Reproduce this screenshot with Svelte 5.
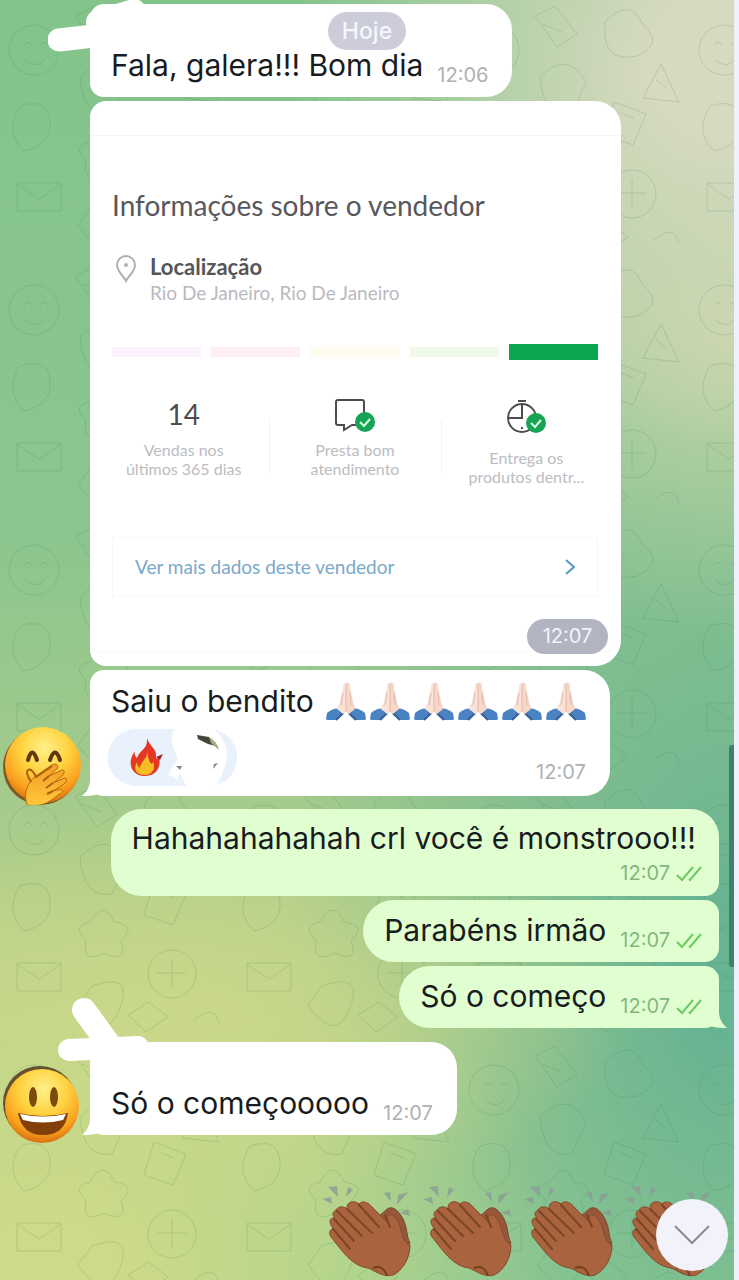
<script lang="ts">
	interface Stat {
		value?: string;
		icon?: 'balloon' | 'clock';
		lines: string[];
	}

	const levels = ['lilac', 'pink', 'yellow', 'lime', 'green'];
	const stats: Stat[] = [
		{ value: '14', lines: ['Vendas nos', 'últimos 365 dias'] },
		{ icon: 'balloon', lines: ['Presta bom', 'atendimento'] },
		{ icon: 'clock', lines: ['Entrega os', 'produtos dentr...'] }
	];
</script>

{#snippet checks()}
	<svg class="checks" viewBox="0 0 28 18" aria-hidden="true">
		<path d="M2 11 L7 16 L18 3 M14 15 L15 16 L26 3" />
	</svg>
{/snippet}

{#snippet tail()}
	<svg class="tail" viewBox="0 0 30 30" aria-hidden="true">
		<path d="M8 4 C9 18 7 24 0 30 C10 30 18 29 24 24 L30 10 V4Z" />
	</svg>
{/snippet}

{#snippet pray()}
	<svg class="pray" viewBox="0 0 40 40">
		<path d="M0 38 L1 32 Q8 26 14 28 L18 33 L11 39 H1Z" fill="#4a83c4" />
		<path d="M40 38 L39 32 Q32 26 26 28 L22 33 L29 39 H39Z" fill="#4a83c4" />
		<path d="M10 39 L17 32 L14 30 M30 39 L23 32 L26 30" stroke="#3b5f93" stroke-width="2" fill="none" />
		<path d="M20 2 Q17 1 17 6 L14 21 Q11 25 11 28 L17 33 L20 31Z" fill="#f9e3d8" />
		<path d="M20 2 Q24 0 24 6 L27 21 Q29 25 29 28 L23 33 L20 31Z" fill="#f6d8ca" />
		<path d="M20 3 V31 M17 12 L15 24 M24 12 L25 24" stroke="#e2b5a5" stroke-width="1" fill="none" />
	</svg>
{/snippet}

{#snippet clap()}
	<svg class="clap" viewBox="0 0 101 96">
		<g fill="#8b9c98" opacity="0.8">
			<path d="M6 3 L15 2 L16 13Z M26 3 L31 6 L24 13Z M0 15 L9 13 L10 20Z" />
			<path d="M62 9 L68 8 L69 18Z M76 11 L86 8 L75 21Z M78 29 L86 25 L88 32Z" />
		</g>
		<path
			d="M64 26 C70 20 77 27 81 35 C86 45 84 52 88 59 L67 76 L46 42Z"
			fill="#96573a"
			stroke="#7c4529"
			stroke-width="1"
		/>
		<path
			d="M14 26 C17 21 23 23 25 25 C24 17 33 16 37 20 C41 15 48 20 50 23 L66 39 C62 31 70 27 75 36 C81 46 79 57 88 61 C88 75 80 87 71 91 C61 94 52 86 46 84 C29 82 19 65 9 53 C6 48 9 44 12 45 C6 39 7 33 13 34 C9 30 12 27 14 26Z"
			fill="#a9643f"
			stroke="#84492a"
			stroke-width="1"
		/>
		<path
			d="M15 27 L40 52 M25 25 L50 49 M37 21 L57 43 M12 35 L32 57 M11 45 L28 65 M63 31 L68 43"
			stroke="#7d4426"
			stroke-width="2"
			fill="none"
			stroke-linecap="round"
		/>
		<path d="M51 84 Q61 80 65 92" stroke="#73401f" stroke-width="2" fill="none" />
	</svg>
{/snippet}

<main class="screen">
	<svg class="doodles" aria-hidden="true">
		<defs>
			<pattern id="doodle" width="230" height="260" patternUnits="userSpaceOnUse">
				<g fill="none" stroke="#2f7a55" stroke-width="1">
					<circle cx="34" cy="50" r="25" />
					<path d="M24 45 q4 -5 8 0 M40 45 q4 -5 8 0 M25 60 q12 10 20 -1" />
					<path d="M75 16 l20 -10 22 28 -20 13z M82 24 l20 8" />
					<path d="M145 22 q26 -26 38 3 q22 18 -6 31 q-36 8 -32 -34" />
					<path d="M201 64 l18 38 -36 -4z M196 80 l10 8" />
					<path d="M80 77 q28 -28 46 5 l-14 32 q-29 5 -32 -37" />
					<path d="M154 102 l32 12 -13 31 -29 -10z M161 113 l13 5" />
					<path d="M20 106 q28 -9 30 15 t-26 30 q-20 -20 -4 -45" />
					<path d="M90 142 q14 -24 24 0 q24 3 7 19 q8 23 -17 12 q-22 12 -18 -13 q-15 -14 4 -18" />
					<path d="M17 183 h44 v28 h-44z M17 184 l22 15 22 -15" />
					<circle cx="172" cy="194" r="24" />
					<path d="M157 193 h29 M172 179 v29 M92 206 q42 -15 28 22 t-42 -3z" />
					<path d="M128 235 l21 -13 19 15 -22 15z M194 240 q20 -17 25 3" />
				</g>
			</pattern>
		</defs>
		<rect width="100%" height="100%" fill="url(#doodle)" />
	</svg>

	<time class="date">Hoje</time>

	<article class="row">
		<div class="bubble named">
			<svg class="scribble-top" viewBox="0 0 100 60" aria-hidden="true">
				<path d="M11 42 L80 34" stroke-width="23" />
				<path d="M50 24 L86 13" stroke-width="24" />
			</svg>
			<p>Fala, galera!!! Bom dia</p>
			<time>12:06</time>
		</div>
	</article>

	<article class="row">
		<section class="card">
			<div class="card-top"></div>
			<h1>Informações sobre o vendedor</h1>
			<div class="location">
				<svg class="pin" viewBox="0 0 20 28" aria-hidden="true">
					<path d="M10 26 C8 21 1 17 1 10 A9 9 0 0 1 19 10 C19 17 12 21 10 26Z" />
					<circle cx="10" cy="10" r="1" />
				</svg>
				<div>
					<h2>Localização</h2>
					<p>Rio De Janeiro, Rio De Janeiro</p>
				</div>
			</div>
			<div class="levels">
				{#each levels as level}
					<span class={level}></span>
				{/each}
			</div>
			<div class="stats">
				{#each stats as stat}
					<div class="stat">
						{#if stat.value}
							<strong>{stat.value}</strong>
						{:else}
							<svg class={['stat-icon', stat.icon]} viewBox="0 0 42 36" aria-hidden="true">
								{#if stat.icon === 'balloon'}
									<path class="line" d="M4 2 H28 Q30 2 30 4 V27 H18 L10 32 V27 H4 Q2 27 2 25 V4 Q2 2 4 2Z" />
								{:else}
									<circle class="line" cx="17" cy="19" r="14" />
									<path class="line" d="M17 5 V19 H4 M13 2 H21 M17 28 V30" />
								{/if}
								<circle cx="31" cy="24" r="10" fill="#17a455" />
								<path class="tick" d="M26 24 L30 28 L36 21" />
							</svg>
						{/if}
						<p>{stat.lines[0]}<br />{stat.lines[1]}</p>
					</div>
				{/each}
			</div>
			<a class="more" href="#vendedor">
				Ver mais dados deste vendedor
				<svg viewBox="0 0 10 16" aria-hidden="true"><path d="M1 1 L9 8 L1 15" /></svg>
			</a>
			<div class="card-bottom"></div>
			<time class="stamp">12:07</time>
		</section>
	</article>

	<article class="row">
		<svg class="avatar" viewBox="0 0 78 78" role="img" aria-label="Avatar">
			<defs>
				<radialGradient id="face" cx="52%" cy="28%" r="72%">
					<stop offset="0" stop-color="#fff08a" />
					<stop offset="0.45" stop-color="#ffd23f" />
					<stop offset="0.8" stop-color="#f9a01f" />
					<stop offset="1" stop-color="#d9720f" />
				</radialGradient>
				<linearGradient id="hand" x1="0" y1="0" x2="0" y2="1">
					<stop offset="0" stop-color="#f39c23" />
					<stop offset="1" stop-color="#ffc83c" />
				</linearGradient>
			</defs>
			<circle cx="38" cy="40" r="38" fill="#7b5a23" />
			<circle cx="40" cy="38" r="38" fill="url(#face)" />
			<path d="M25 33 Q29 18 34 33 M47 33 Q52 18 57 33" stroke="#60370b" stroke-width="4" fill="none" stroke-linecap="round" />
			<path
				d="M24 78 C20 65 25 55 33 49 L49 38 Q55 35 55 41 L46 49 L59 43 Q63 43 60 48 L50 56 L62 51 Q66 53 61 57 L50 64 L58 62 Q62 65 55 68 C46 76 38 80 24 78Z"
				fill="url(#hand)"
				stroke="#b9680d"
				stroke-width="1"
			/>
			<path d="M28 55 Q22 45 25 43 Q29 41 33 50 L49 39 M46 49 L40 54 M50 56 L43 61 M50 64 L44 67" stroke="#aa5f10" stroke-width="2" fill="none" />
		</svg>
		<div class="bubble reacted">
			{@render tail()}
			<div class="line-with-emoji">
				<p>Saiu o bendito</p>
				<span class="prayers" role="img" aria-label="Mãos em oração">
					{#each { length: 6 } as _}
						{@render pray()}
					{/each}
				</span>
			</div>
			<div class="reaction-row">
				<button class="reaction" aria-label="Reações">
					<svg viewBox="0 0 129 57" aria-hidden="true">
						<path d="M66 0 Q60 13 70 29 L60 46 Q68 46 72 57 H109 L117 37 Q124 14 105 0Z" fill="#fff" />
						<path d="M67 57 L72 44 L78 57Z" fill="#e9f1fd" />
						<path
							d="M39 9 C40 21 32 20 29 29 C27 27 26 25 27 22 C18 34 24 46 35 47 C46 48 54 40 51 28 C49 31 48 30 48 27 C49 20 42 18 39 9Z"
							fill="#e43824"
						/>
						<path d="M39 22 C40 30 32 33 32 39 C30 38 29 35 29 33 C24 43 31 46 36 46 C45 46 48 38 45 33 C43 38 40 30 39 22Z" fill="#f8bd24" />
						<path d="M48 28 L55 25 L52 31Z" fill="#9d2927" />
						<path d="M89 6 L101 8 L108 17 L100 15 L90 10Z" fill="#41463d" />
						<path d="M101 8 Q109 12 111 21 L103 14Z" fill="#a2ad7b" />
						<path d="M68 37 h6 l-2 4z M110 34 l-5 6 1 -5z" fill="#7c8880" />
					</svg>
				</button>
				<time>12:07</time>
			</div>
		</div>
	</article>

	<div class="sent">
		<div class="bubble out stacked">
			<p>Hahahahahahah crl você é monstrooo!!!</p>
			<time>12:07 {@render checks()}</time>
		</div>
		<div class="bubble out">
			<p>Parabéns irmão</p>
			<time>12:07 {@render checks()}</time>
		</div>
		<div class="bubble out">
			{@render tail()}
			<p>Só o começo</p>
			<time>12:07 {@render checks()}</time>
		</div>
	</div>

	<article class="row">
		<svg class="avatar" viewBox="0 0 78 78" role="img" aria-label="Avatar">
			<circle cx="37" cy="37" r="37" fill="#63512f" />
			<circle cx="39" cy="40" r="37" fill="url(#face)" />
			<ellipse cx="30" cy="31" rx="4" ry="10" fill="#7a4b0c" />
			<ellipse cx="51" cy="31" rx="4" ry="10" fill="#7a4b0c" />
			<path d="M15 47 Q40 53 65 47 Q62 69 40 69 Q19 69 15 47Z" fill="#803f0b" />
			<path d="M17 48 Q40 53 63 48 L60 54 Q40 59 20 54Z" fill="#fff" />
		</svg>
		<div class="bubble named">
			<svg class="scribble-bottom" viewBox="0 0 110 70" aria-hidden="true">
				<path d="M34 12 L63 52" stroke-width="24" />
				<path d="M19 52 L88 49" stroke-width="22" />
			</svg>
			{@render tail()}
			<p>Só o começooooo</p>
			<time>12:07</time>
		</div>
	</article>

	<div class="claps" role="img" aria-label="Palmas">
		{#each { length: 4 } as _}
			{@render clap()}
		{/each}
	</div>

	<div class="scrollbar"></div>
	<button class="to-bottom" aria-label="Ir para o fim">
		<svg viewBox="0 0 36 20" aria-hidden="true"><path d="M1 1 L18 18 L35 1" /></svg>
	</button>
</main>

<style>
	:global(body) {
		margin: 0;
	}

	.screen {
		position: relative;
		isolation: isolate;
		box-sizing: border-box;
		min-height: 100vh;
		overflow: hidden;
		padding: 4px 0 0;
		border-right: 5px solid #eef1fc;
		font-family: Inter, 'Liberation Sans', sans-serif;
		color: #181c1e;
		background:
			radial-gradient(ellipse 60% 30% at 100% 5%, #d6dabf 20%, #d0d9b600),
			radial-gradient(ellipse 45% 24% at 100% 26%, #c6d4a9, #c3d4a500),
			radial-gradient(ellipse 70% 34% at 6% 100%, #cdda88 15%, #cbd88900),
			radial-gradient(ellipse 60% 16% at 26% 79%, #c8d68a, #c6d48600),
			radial-gradient(ellipse 62% 50% at 100% 76%, #67b392 10%, #6cb69400),
			linear-gradient(#83c48b, #8bc68e 42%, #a9cc8b 66%, #b6d28c 80%, #9ccf90);
	}

	p,
	h1,
	h2 {
		margin: 0;
		font-weight: 400;
	}

	button {
		padding: 0;
		border: 0;
	}

	.doodles {
		position: absolute;
		inset: 0;
		width: 100%;
		height: 100%;
		z-index: -1;
		opacity: 0.18;
	}

	.date {
		position: absolute;
		top: 12px;
		left: 50%;
		z-index: 1;
		transform: translateX(-50%);
		width: 78px;
		border-radius: 20px;
		background: #cdccda;
		color: #f6f6fb;
		font-size: 23px;
		font-weight: 500;
		line-height: 38px;
		text-align: center;
	}

	.row {
		position: relative;
		display: flex;
		padding-left: 90px;
		margin-bottom: 4px;
	}

	.avatar {
		position: absolute;
		left: 3px;
		bottom: -9px;
		width: 78px;
		height: 78px;
	}

	.bubble {
		position: relative;
		box-sizing: border-box;
		display: flex;
		align-items: flex-end;
		gap: 14px;
		padding: 12px 24px 13px 21px;
		border-radius: 14px 26px 26px 14px;
		background: #fff;
		font-size: 30px;
		line-height: 38px;
	}

	.bubble.named {
		padding-top: 42px;
	}

	.bubble time {
		display: flex;
		align-items: center;
		gap: 5px;
		margin-bottom: -3px;
		color: #aeb1b5;
		font-size: 20px;
		line-height: 24px;
	}

	.tail {
		position: absolute;
		left: -8px;
		bottom: 0;
		z-index: -1;
		width: 30px;
		height: 30px;
		fill: #fff;
	}

	.scribble-top,
	.scribble-bottom {
		position: absolute;
		fill: none;
		stroke: #fff;
		stroke-linecap: round;
	}

	.scribble-top {
		left: -42px;
		top: -6px;
		width: 100px;
	}

	.scribble-bottom {
		left: -40px;
		top: -44px;
		width: 110px;
	}

	/* seller card */
	.card {
		position: relative;
		box-sizing: border-box;
		width: 100%;
		max-width: 531px;
		margin-right: 16px;
		padding: 0 23px 14px 22px;
		border-radius: 16px 26px 26px 16px;
		background: #fff;
		font-family: Lato, sans-serif;
	}

	.card-top {
		height: 34px;
		margin: 0 -23px 52px -22px;
		border-bottom: 1px solid #f5f5f7;
	}

	.card h1 {
		color: #58585c;
		font-size: 28px;
		line-height: 34px;
	}

	.location {
		display: flex;
		gap: 14px;
		margin-top: 32px;
		padding-left: 4px;
	}

	.pin {
		width: 20px;
		height: 28px;
		margin-top: 1px;
		fill: none;
		stroke: #b0b0b4;
		stroke-width: 2;
	}

	.card h2 {
		color: #55555a;
		font-size: 22px;
		font-weight: 700;
		line-height: 26px;
	}

	.location p {
		color: #b9b9bf;
		font-size: 19px;
		line-height: 26px;
	}

	.levels {
		display: grid;
		grid-template-columns: repeat(5, 1fr);
		gap: 10px;
		margin-top: 38px;
	}

	.levels span {
		height: 10px;
		align-self: center;
	}

	.levels .lilac {
		background: #fbf2fb;
	}

	.levels .pink {
		background: #feeef6;
	}

	.levels .yellow {
		background: #fefcec;
	}

	.levels .lime {
		background: #effae8;
	}

	.levels .green {
		height: 16px;
		background: #0aa650;
	}

	.stats {
		display: grid;
		grid-template-columns: repeat(3, 1fr);
		margin: 36px -14px 0;
	}

	.stat {
		position: relative;
		display: flex;
		flex-direction: column;
		align-items: center;
		text-align: center;
	}

	.stat + .stat::before {
		content: '';
		position: absolute;
		left: 0;
		top: 24px;
		height: 54px;
		border-left: 1px solid #f3f3f5;
	}

	.stat strong {
		height: 44px;
		color: #4c4c50;
		font-size: 28px;
		font-weight: 400;
		line-height: 36px;
	}

	.stat-icon {
		width: 42px;
		height: 36px;
		margin: 2px 0 6px;
	}

	.stat-icon.clock {
		margin: 3px 0 13px;
	}

	.stat-icon .line {
		fill: none;
		stroke: #4f4a50;
		stroke-width: 2;
	}

	.stat-icon .tick {
		fill: none;
		stroke: #d9ffe6;
		stroke-width: 2;
	}

	.stat p {
		color: #bcbcc2;
		font-size: 16px;
		line-height: 19px;
	}

	.more {
		display: flex;
		align-items: center;
		justify-content: space-between;
		margin-top: 51px;
		padding: 0 22px;
		border: 1px solid #f7f7f9;
		color: #7aa9c9;
		font-size: 19px;
		line-height: 58px;
		text-decoration: none;
	}

	.more svg {
		width: 10px;
		height: 16px;
		fill: none;
		stroke: #5598c4;
		stroke-width: 2;
	}

	.card-bottom {
		height: 54px;
		margin: 0 -14px;
		border-bottom: 1px solid #f7f7f9;
	}

	.stamp {
		position: absolute;
		right: 13px;
		bottom: 12px;
		width: 81px;
		border-radius: 18px;
		background: #b3b4c1;
		color: #f3f3f8;
		font-family: Inter, sans-serif;
		font-size: 20px;
		line-height: 35px;
		text-align: center;
	}

	/* reacted message */
	.bubble.reacted {
		flex-direction: column;
		align-items: stretch;
		gap: 8px;
		padding: 11px 24px 10px 21px;
	}

	.line-with-emoji {
		display: flex;
		align-items: center;
		gap: 12px;
	}

	.prayers {
		display: flex;
		gap: 4px;
	}

	.pray {
		width: 40px;
		height: 40px;
	}

	.reaction-row {
		display: flex;
		align-items: flex-end;
		justify-content: space-between;
	}

	.reaction-row time {
		margin-bottom: 2px;
	}

	.reaction {
		width: 129px;
		height: 57px;
		margin-left: -3px;
		border-radius: 28px;
		background: #e9f1fd;
		overflow: hidden;
	}

	.reaction svg {
		display: block;
	}

	/* sent messages */
	.sent {
		display: flex;
		flex-direction: column;
		align-items: flex-end;
		gap: 4px;
		margin: 13px 15px 14px 0;
	}

	.out {
		padding: 11px 16px 13px 21px;
		border-radius: 31px 14px 14px 31px;
		background: #e1fed0;
	}

	.out.stacked {
		flex-direction: column;
		gap: 4px;
		padding: 10px 16px 14px 21px;
		border-top-right-radius: 28px;
	}

	.out.stacked p {
		margin-right: 7px;
	}

	.out time {
		color: #83b780;
	}

	.checks {
		width: 28px;
		height: 18px;
		fill: none;
		stroke: #6acb60;
		stroke-width: 2;
	}

	.out .tail {
		left: auto;
		right: -8px;
		fill: #e1fed0;
		transform: scaleX(-1);
	}

	.claps {
		display: flex;
		justify-content: flex-end;
		margin: 49px 8px 0 0;
	}

	.clap {
		flex: none;
		width: 101px;
		height: 96px;
		margin-bottom: -4px;
	}

	.scrollbar {
		position: absolute;
		right: 0;
		top: 745px;
		width: 5px;
		height: 222px;
		border-radius: 3px 0 0 3px;
		background: #3f7f6c;
	}

	.to-bottom {
		position: absolute;
		right: 6px;
		bottom: 9px;
		display: grid;
		place-items: center;
		width: 72px;
		height: 72px;
		border-radius: 50%;
		background: #f2f2fa;
	}

	.to-bottom svg {
		width: 36px;
		height: 20px;
		fill: none;
		stroke: #8b8b97;
		stroke-width: 2;
	}
</style>
